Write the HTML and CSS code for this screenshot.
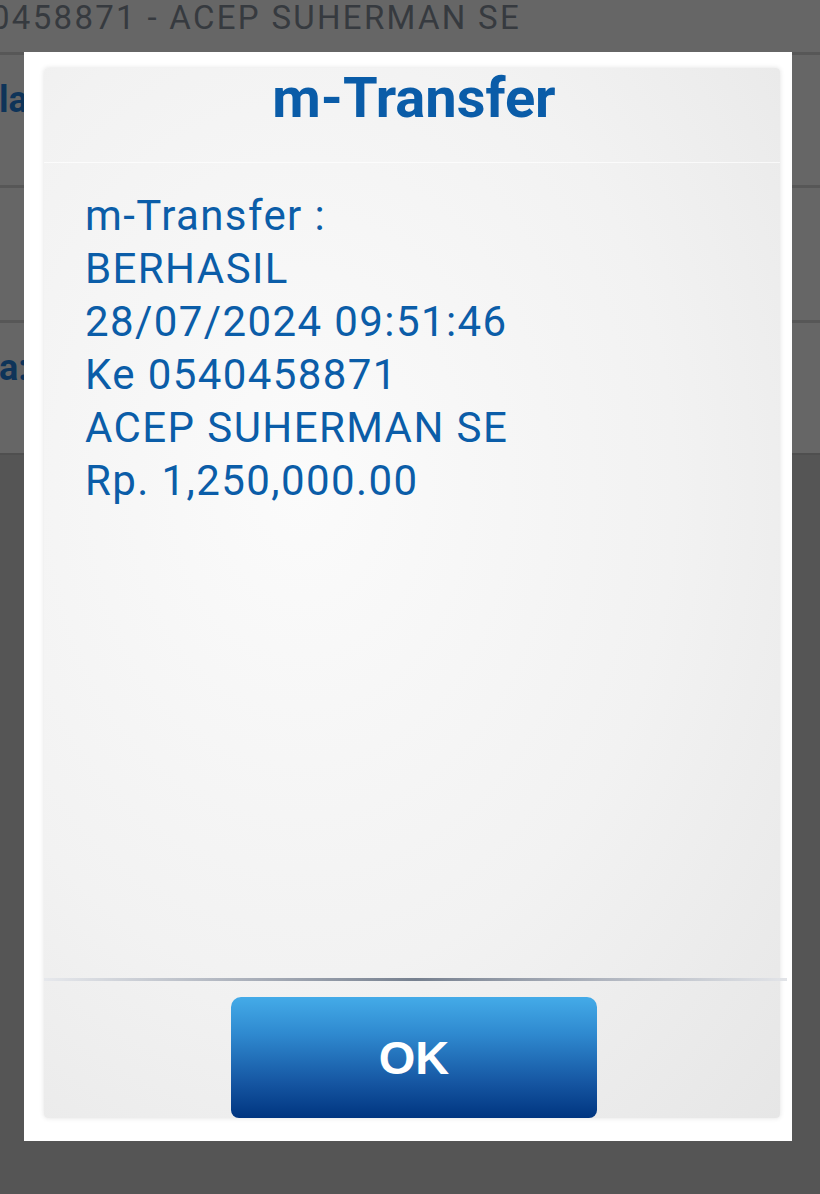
FILE: index.html
```html
<!DOCTYPE html>
<html lang="en">
<head>
    <meta charset="UTF-8">
    <meta name="viewport" content="width=device-width, initial-scale=1.0">
    <title>m-Transfer</title>
    <link rel="stylesheet" href="styles.css">
</head>
<body>
    <div class="screen">
        <div class="topbar">0458871 - ACEP SUHERMAN SE</div>
        <div class="row"><span class="label">la</span></div>
        <div class="row row-tall"></div>
        <div class="row"><span class="label">a:</span></div>
        <div class="rest"></div>
    </div>

    <div class="dialog">
        <div class="panel">
            <div class="panel-head">
                <h1>m-Transfer</h1>
            </div>
            <div class="panel-body">
                <p>m-Transfer :</p>
                <p>BERHASIL</p>
                <p>28/07/2024 09:51:46</p>
                <p>Ke 0540458871</p>
                <p>ACEP SUHERMAN SE</p>
                <p>Rp. 1,250,000.00</p>
            </div>
            <div class="divider"></div>
            <div class="panel-foot">
                <button class="ok-btn">OK</button>
            </div>
        </div>
    </div>
</body>
</html>
```

FILE: styles.css
```css
body {
    margin: 0;
    padding: 0;
    font-family: Roboto, "Noto Sans", sans-serif;
    background-color: #555;
    overflow: hidden;
}
.screen {
    height: 1194px;
    display: flex;
    flex-direction: column;
}
.topbar {
    height: 52px;
    background-color: #666;
    color: #363a3f;
    font-size: 33px;
    line-height: 36px;
    letter-spacing: 2.3px;
    margin-left: -9px;
    white-space: nowrap;
}
.row {
    height: 130px;
    background-color: #666;
    border-top: 3px solid #575757;
    display: flex;
    align-items: center;
}
.row-tall {
    height: 132px;
}
.row .label {
    font-size: 36px;
    font-weight: bold;
    color: #0e3459;
    margin-top: -40px;
    margin-left: -1px;
}
.rest {
    flex: 1;
    background-color: #555;
    border-top: 2px solid #4f4f4f;
}
.dialog {
    position: absolute;
    top: 52px;
    left: 24px;
    width: 768px;
    height: 1089px;
    background-color: #fff;
    padding: 16px 12px 23px 20px;
    box-sizing: border-box;
}
.panel {
    height: 100%;
    display: flex;
    flex-direction: column;
    border-radius: 4px;
    background: radial-gradient(ellipse at 35% 40%, #fbfbfb 0%, #f2f2f2 55%, #e6e6e6 100%);
    box-shadow: 0 0 5px rgba(0, 0, 0, 0.12);
}
.panel-head {
    height: 94px;
    border-bottom: 1px solid rgba(255, 255, 255, 0.7);
    display: flex;
    justify-content: center;
}
.panel-head h1 {
    margin: 0;
    padding-left: 4px;
    font-size: 56px;
    font-weight: bold;
    color: #0a5ca8;
    line-height: 60px;
}
.panel-body {
    flex: 1;
    padding: 26px 0 0 41px;
    color: #0b5da8;
    font-size: 42px;
    line-height: 53px;
    letter-spacing: 1.4px;
}
.panel-body p {
    margin: 0;
}
.divider {
    height: 3px;
    margin-right: -7px;
    background: linear-gradient(90deg, #e6e8ec 0%, #a5abb6 30%, #76808f 50%, #a5abb6 70%, #e2e4e8 100%);
}
.panel-foot {
    height: 137px;
    display: flex;
    justify-content: center;
    align-items: flex-end;
    padding-left: 4px;
}
.ok-btn {
    width: 366px;
    height: 121px;
    border: none;
    border-radius: 10px 10px 8px 8px;
    background: linear-gradient(180deg, #44abe8 0%, #2f8ad0 30%, #1657a3 70%, #003580 100%);
    color: #fff;
    font-family: "Liberation Sans", Arial, sans-serif;
    font-size: 47px;
    font-weight: bold;
    padding-top: 0;
    cursor: pointer;
}
```
